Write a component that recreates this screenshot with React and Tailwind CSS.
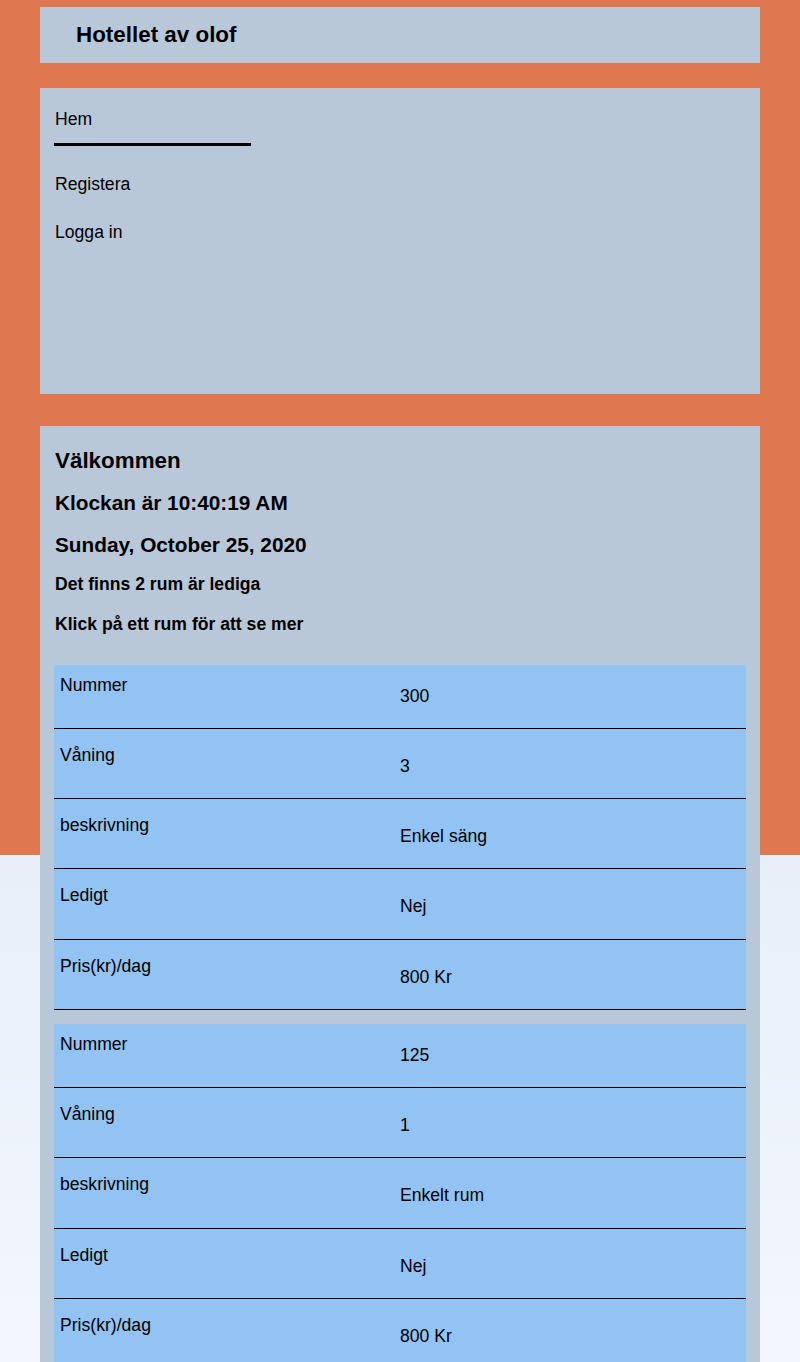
import React from "react";

const rooms = [
  { nummer: "300", vaning: "3", beskrivning: "Enkel säng", ledigt: "Nej", pris: "800 Kr" },
  { nummer: "125", vaning: "1", beskrivning: "Enkelt rum", ledigt: "Nej", pris: "800 Kr" },
];

function Row({ label, value, first }) {
  return (
    <div
      className={
        "grid grid-cols-2 border-b border-black " +
        (first ? "h-[63.6px]" : "h-[70.4px]")
      }
    >
      <div className={"pl-[6px] leading-[20px] " + (first ? "pt-[10px]" : "pt-[16px]")}>{label}</div>
      <div className={"leading-[20px] " + (first ? "pt-[21px]" : "pt-[27px]")}>{value}</div>
    </div>
  );
}

function RoomTable({ room }) {
  return (
    <div className="bg-[#93c3f3]">
      <Row first label="Nummer" value={room.nummer} />
      <Row label="Våning" value={room.vaning} />
      <Row label="beskrivning" value={room.beskrivning} />
      <Row label="Ledigt" value={room.ledigt} />
      <Row label="Pris(kr)/dag" value={room.pris} />
    </div>
  );
}

export default function App() {
  return (
    <div
      className="min-h-[1362px] bg-[linear-gradient(180deg,#df7850_0px,#df7850_855px,#e7eff9_855px,#f3f7fd_1362px)] pt-[7px] text-black text-[17.6px]"
      style={{ fontFamily: '"Liberation Sans", Arial, sans-serif' }}
    >
      <div className="mx-[40px] flex flex-col">
        <header className="h-[56px] bg-[#b9c8d8] flex items-center pl-[36px]">
          <h1 className="text-[22.4px] font-bold leading-[26px]">Hotellet av olof</h1>
        </header>

        <nav className="mt-[25px] h-[306px] bg-[#b9c8d8] pl-[14px] pt-[21px]">
          <div className="w-[197px] pl-[1px] pb-[14px] border-b-[3px] border-black leading-[20px]">Hem</div>
          <div className="mt-[28px] pl-[1px] leading-[20px]">Registera</div>
          <div className="mt-[28px] pl-[1px] leading-[20px]">Logga in</div>
        </nav>

        <main className="mt-[32px] bg-[#b9c8d8] px-[14px] pt-[22px] pb-[40px]">
          <div className="pl-[1px]">
            <h2 className="text-[22.4px] font-bold leading-[26px]">Välkommen</h2>
            <h3 className="mt-[17px] text-[20.8px] font-bold leading-[24px]">Klockan är 10:40:19 AM</h3>
            <h3 className="mt-[18px] text-[20.8px] font-bold leading-[24px]">Sunday, October 25, 2020</h3>
            <p className="mt-[17px] font-bold leading-[20px]">Det finns 2 rum är lediga</p>
            <p className="mt-[20px] font-bold leading-[20px]">Klick på ett rum för att se mer</p>
          </div>

          <div className="mt-[31px] flex flex-col gap-[14px]">
            {rooms.map((r) => (
              <RoomTable key={r.nummer} room={r} />
            ))}
          </div>
        </main>
      </div>
    </div>
  );
}
